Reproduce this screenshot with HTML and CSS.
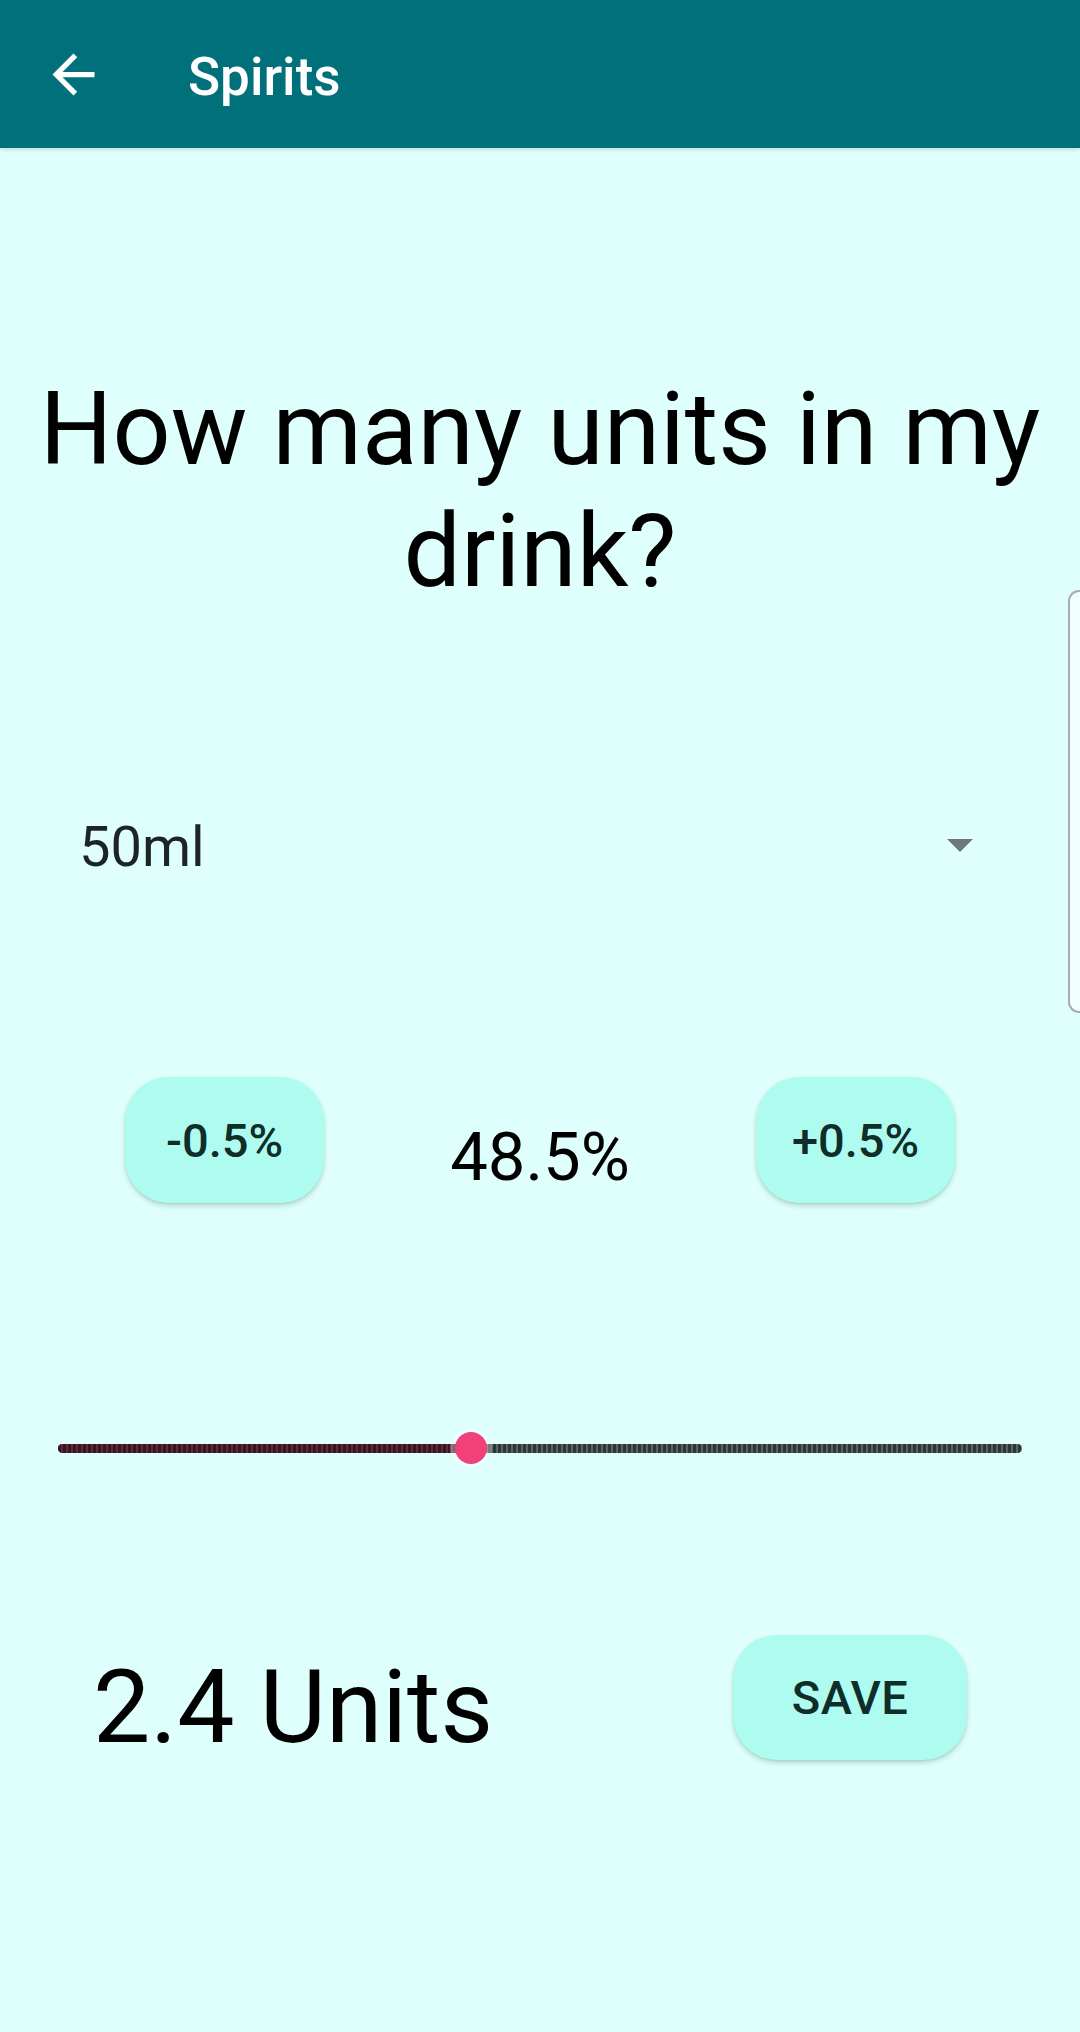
FILE: index.html
```html
<!DOCTYPE html>
<html lang="en">
<head>
<meta charset="utf-8">
<title>Spirits</title>
<link rel="stylesheet" href="styles.css">
</head>
<body>
<header class="appbar">
  <svg class="back" viewBox="0 0 24 24" aria-hidden="true"><path d="M20 11H7.83l5.59-5.59L12 4l-8 8 8 8 1.41-1.41L7.83 13H20v-2z"/></svg>
  <div class="title">Spirits</div>
</header>
<main class="content">
  <h1 class="question">How many units in my drink?</h1>
  <div class="spinner">
    <span class="spinner-value">50ml</span>
    <span class="spinner-arrow"></span>
  </div>
  <div class="abv-row">
    <button class="pill">-0.5%</button>
    <span class="abv-value">48.5%</span>
    <button class="pill">+0.5%</button>
  </div>
  <div class="slider">
    <div class="track">
      <div class="track-active" style="width:42.8%"></div>
      <div class="thumb" style="left:42.8%"></div>
    </div>
  </div>
  <div class="result-row">
    <span class="units">2.4 Units</span>
    <button class="pill save">SAVE</button>
  </div>
</main>
<div class="edge-handle"></div>
</body>
</html>
```
FILE: styles.css
```css
html, body {
  margin: 0;
  padding: 0;
}
body {
  width: 1080px;
  height: 2032px;
  overflow: hidden;
  background: #defffb;
  font-family: Roboto, "Noto Sans", "Liberation Sans", sans-serif;
  position: relative;
}
.appbar {
  height: 148px;
  background: #00707a;
  display: flex;
  align-items: center;
  padding-left: 42px;
  box-sizing: border-box;
  box-shadow: 0 2px 4px rgba(0, 0, 0, 0.12);
}
.back {
  width: 63px;
  height: 63px;
  fill: #ffffff;
  flex: none;
}
.title {
  margin-left: 83px;
  margin-top: 6px;
  color: #ffffff;
  font-size: 53px;
  font-weight: 500;
  line-height: 1;
}
.content {
  display: flex;
  flex-direction: column;
}
.question {
  margin: 220px 20px 0;
  font-size: 102px;
  line-height: 122px;
  font-weight: 400;
  text-align: center;
  color: #000000;
}
.spinner {
  margin-top: 202px;
  display: flex;
  align-items: center;
  justify-content: space-between;
  padding: 0 107px 0 79px;
  height: 66px;
}
.spinner-value {
  font-size: 56px;
  color: #1c2424;
  line-height: 66px;
}
.spinner-arrow {
  width: 0;
  height: 0;
  border-left: 13px solid transparent;
  border-right: 13px solid transparent;
  border-top: 13px solid #6f7777;
  margin-top: -4px;
}
.abv-row {
  margin-top: 197px;
  display: flex;
  justify-content: space-between;
  align-items: flex-start;
  padding: 0 125px;
  height: 126px;
}
.pill {
  border: none;
  margin: 0;
  padding: 0;
  width: 199px;
  height: 126px;
  border-radius: 44px;
  background: #aefcef;
  color: #0f2d29;
  font-family: Roboto, "Noto Sans", "Liberation Sans", sans-serif;
  font-size: 47px;
  font-weight: 500;
  display: flex;
  align-items: center;
  justify-content: center;
  box-shadow: 0 3px 5px rgba(0, 60, 50, 0.18), 0 1px 2px rgba(0, 0, 0, 0.08);
}
.abv-value {
  margin-top: 41px;
  font-size: 67px;
  color: #000000;
  line-height: 78px;
}
.slider {
  margin-top: 221px;
  height: 48px;
  padding: 0 58px;
  display: flex;
  align-items: center;
}
.track {
  position: relative;
  flex: 1;
  height: 9px;
  border-radius: 5px;
  background: repeating-linear-gradient(90deg, #2c3635 0 3px, #5a6664 3px 5px);
}
.track-active {
  height: 9px;
  border-radius: 5px 0 0 5px;
  background: repeating-linear-gradient(90deg, #3a1322 0 3px, #5e2b3c 3px 5px);
}
.thumb {
  position: absolute;
  top: 50%;
  width: 32px;
  height: 32px;
  margin: -16px 0 0 -16px;
  border-radius: 50%;
  background: #f2407a;
  box-shadow: 0 0 0 5px rgba(255, 255, 255, 0.35);
}
.result-row {
  margin-top: 163px;
  display: flex;
  justify-content: space-between;
  align-items: flex-start;
  padding: 0 113px 0 93px;
}
.units {
  margin-top: 11px;
  font-size: 102px;
  line-height: 122px;
  color: #000000;
}
.save {
  width: 234px;
  height: 125px;
  letter-spacing: 0.5px;
}
.edge-handle {
  position: absolute;
  top: 590px;
  right: 0;
  width: 10px;
  height: 419px;
  border: 2px solid #a6afae;
  border-right: none;
  border-radius: 11px 0 0 11px;
  background: #f0fffd;
}
```
